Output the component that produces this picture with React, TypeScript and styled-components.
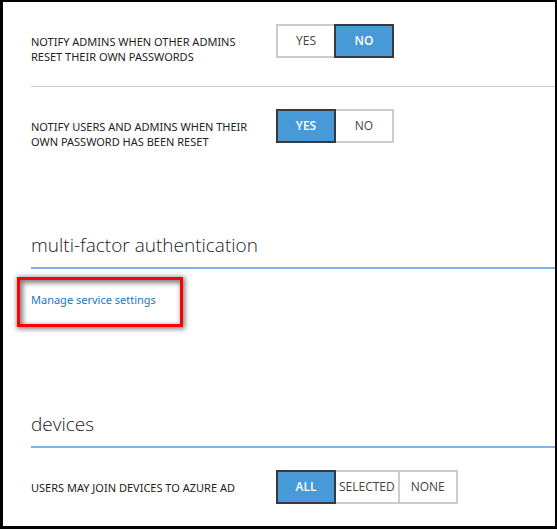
import React, { useId, useState } from "react";
import styled, { createGlobalStyle } from "styled-components";

const GlobalStyle = createGlobalStyle`
  *, *::before, *::after { box-sizing: border-box; }
  body {
    margin: 0;
    background: #fff;
    font-family: "Noto Sans", "Open Sans", sans-serif;
    color: #222;
  }
`;

const Frame = styled.main`
  border: solid #000;
  border-width: 2px 2px 3px 3px;
  padding: 22px 0 22px 28px;
  background: #fff;
`;

const SettingRow = styled.fieldset<{ $ruled?: boolean }>`
  display: grid;
  grid-template-columns: 245px 1fr;
  align-items: start;
  margin: 0;
  padding: 0 0 ${(p) => (p.$ruled ? "22px" : "0")};
  border: 0 solid #ccc;
  border-bottom-width: ${(p) => (p.$ruled ? "1px" : "0")};

  & + & {
    margin-top: 22px;
  }
`;

const SettingLabel = styled.span`
  padding: 10px 16px 0 0;
  font-size: 11px;
  line-height: 15px;
  white-space: pre-line;
`;

const Segments = styled.div`
  display: flex;
`;

const Segment = styled.label`
  position: relative;
  display: flex;
  align-items: center;
  justify-content: center;
  min-width: 60px;
  height: 34px;
  padding: 0 3px;
  border: 2px solid #ccc;
  background: #fff;
  color: #444;
  font-family: "Open Sans", "Noto Sans", sans-serif;
  font-size: 12px;
  line-height: 16px;
  cursor: pointer;

  & + & {
    margin-left: -2px;
  }

  &:has(input:checked) {
    z-index: 1;
    border-color: #3b383d;
    background: #4799d8;
    color: #fff;
    font-weight: 600;
  }

  &:has(input:focus-visible) {
    outline: 2px solid #7cb4e4;
  }
`;

const Radio = styled.input`
  position: absolute;
  inset: 0;
  margin: 0;
  opacity: 0;
  cursor: pointer;
`;

const Section = styled.section`
  margin-top: 82px;
`;

const SectionTitle = styled.h2`
  margin: 0 0 22px;
  padding-bottom: 8px;
  border-bottom: 2px solid #7cb4e6;
  font-family: "Open Sans", "Noto Sans", sans-serif;
  font-size: 19px;
  font-weight: 300;
  line-height: 28px;
`;

const LinkBlock = styled.div`
  position: relative;
  width: fit-content;
  margin-bottom: 101px;
  line-height: 18px;
`;

const SettingsLink = styled.a`
  display: block;
  color: #1a78c2;
  font-size: 11px;
  text-decoration: none;
`;

const Highlight = styled.span`
  position: absolute;
  inset: -14px -27px -18px -14px;
  border: 3px solid #f00;
  box-shadow: 1px 1px 5px 1px rgba(0, 0, 0, 0.5),
    inset 2px 2px 5px 1px rgba(0, 0, 0, 0.5);
  pointer-events: none;
`;

type SettingProps = {
  label: string;
  options: string[];
  initial: string;
  ruled?: boolean;
};

function Setting({ label, options, initial, ruled }: SettingProps) {
  const id = useId();
  const [value, setValue] = useState(initial);
  return (
    <SettingRow $ruled={ruled} role="radiogroup" aria-labelledby={`${id}-label`}>
      <SettingLabel id={`${id}-label`}>{label}</SettingLabel>
      <Segments>
        {options.map((option) => (
          <Segment key={option}>
            <Radio
              type="radio"
              name={id}
              value={option}
              checked={value === option}
              onChange={() => setValue(option)}
            />
            {option}
          </Segment>
        ))}
      </Segments>
    </SettingRow>
  );
}

export default function App() {
  return (
    <>
      <GlobalStyle />
      <Frame>
        <Setting
          label={"NOTIFY ADMINS WHEN OTHER ADMINS\nRESET THEIR OWN PASSWORDS"}
          options={["YES", "NO"]}
          initial="NO"
          ruled
        />
        <Setting
          label={"NOTIFY USERS AND ADMINS WHEN THEIR\nOWN PASSWORD HAS BEEN RESET"}
          options={["YES", "NO"]}
          initial="YES"
        />
        <Section>
          <SectionTitle>multi-factor authentication</SectionTitle>
          <LinkBlock>
            <SettingsLink href="#service-settings">Manage service settings</SettingsLink>
            <Highlight />
          </LinkBlock>
        </Section>
        <Section>
          <SectionTitle>devices</SectionTitle>
          <Setting
            label="USERS MAY JOIN DEVICES TO AZURE AD"
            options={["ALL", "SELECTED", "NONE"]}
            initial="ALL"
          />
        </Section>
      </Frame>
    </>
  );
}
